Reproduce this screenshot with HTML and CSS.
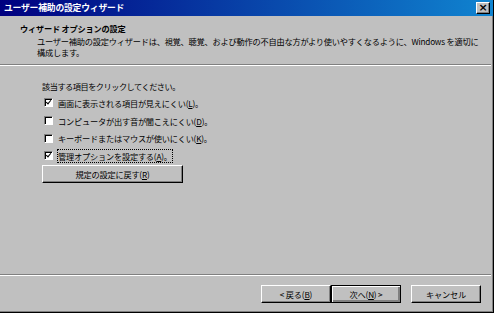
FILE: index.html
```html
<!DOCTYPE html>
<html lang="ja">
<head>
    <meta charset="UTF-8">
    <link rel="stylesheet" href="styles.css">
    <title>ユーザー補助の設定ウィザード</title>
</head>
<body>
    <div class="dialog">
        <div class="titlebar">
            <span class="title">ユーザー補助の設定ウィザード</span>
            <span class="close">×</span>
        </div>

        <div class="header">
            <div class="header-title">ウィザード オプションの設定</div>
            <div class="header-desc">ユーザー補助の設定ウィザードは、視覚、聴覚、および動作の不自由な方がより使いやすくなるように、Windows を適切に<br>構成します。</div>
        </div>
        <div class="sep"></div>

        <div class="content">
            <div class="prompt">該当する項目をクリックしてください。</div>
            <label class="check"><span class="box on"></span>画面に表示される項目が見えにくい(<u>L</u>)。</label>
            <label class="check"><span class="box"></span>コンピュータが出す音が聞こえにくい(<u>D</u>)。</label>
            <label class="check"><span class="box"></span>キーボードまたはマウスが使いにくい(<u>K</u>)。</label>
            <label class="check"><span class="box on"></span><span class="focus">管理オプションを設定する(<u>A</u>)。</span></label>
            <button class="btn wide">規定の設定に戻す(<u>R</u>)</button>
        </div>

        <div class="sep"></div>
        <div class="footer">
            <button class="btn">&lt; 戻る(<u>B</u>)</button>
            <button class="btn default">次へ(<u>N</u>) &gt;</button>
            <button class="btn cancel">キャンセル</button>
        </div>
    </div>
</body>
</html>
```

FILE: styles.css
```css
body {
    margin: 0;
    font-family: 'Noto Sans CJK JP', 'DejaVu Sans', sans-serif;
    font-size: 8.2px;
    letter-spacing: -0.2px;
    color: #000;
    background: #c0c0c0;
}

.dialog {
    width: 494px;
    height: 313px;
    box-sizing: border-box;
    background: #c0c0c0;
    border-right: 1px solid #000;
    border-bottom: 1px solid #000;
    box-shadow: inset -1px -1px 0 #808080;
    display: flex;
    flex-direction: column;
}

.titlebar {
    height: 16px;
    background: linear-gradient(to right, #000080, #1084d0);
    display: flex;
    align-items: center;
    justify-content: space-between;
    padding: 0 3px 0 4px;
}

.title {
    color: #fff;
    font-weight: bold;
    font-size: 8.8px;
    line-height: 16px;
}

.close {
    width: 14px;
    height: 12px;
    box-sizing: border-box;
    background: #c0c0c0;
    border: 1px solid;
    border-color: #fff #000 #000 #fff;
    box-shadow: inset -1px -1px 0 #808080;
    font-size: 11px;
    font-weight: bold;
    line-height: 9px;
    text-align: center;
    font-family: 'DejaVu Sans', sans-serif;
}

.header {
    height: 48px;
    padding: 6px 0 0 20px;
    box-sizing: border-box;
}

.header-title {
    font-weight: bold;
    line-height: 13px;
}

.header-desc {
    margin-left: 17px;
    margin-top: 1px;
    line-height: 11px;
    white-space: nowrap;
}

.sep {
    height: 1px;
    background: #808080;
    border-bottom: 1px solid #fff;
    margin-right: 2px;
}

.content {
    flex: 1;
    padding: 14px 0 0 42px;
}

.prompt {
    line-height: 12px;
    margin-bottom: 2px;
    letter-spacing: -0.5px;
}

.check {
    display: flex;
    align-items: center;
    height: 17.7px;
}

.box {
    width: 9px;
    height: 9px;
    box-sizing: border-box;
    background: #fff;
    border: 1px solid;
    border-color: #808080 #fff #fff #808080;
    box-shadow: inset 1px 1px 0 #000;
    margin: 0 5px 0 2px;
    position: relative;
}

.box.on::after {
    content: "";
    position: absolute;
    left: 2px;
    top: 0px;
    width: 2px;
    height: 4px;
    border: solid #000;
    border-width: 0 1.5px 1.5px 0;
    transform: rotate(40deg);
}

.focus {
    outline: 1px dotted #000;
}

.btn {
    font: inherit;
    letter-spacing: inherit;
    background: #c0c0c0;
    border: 1px solid;
    border-color: #fff #000 #000 #fff;
    box-shadow: inset -1px -1px 0 #808080;
    padding: 0;
    height: 18px;
    color: #000;
}

.wide {
    width: 141px;
}

.footer {
    height: 36px;
    display: flex;
    align-items: center;
    padding: 0 0 0 261px;
    box-sizing: border-box;
}

.footer .btn {
    width: 70px;
}

.footer .default {
    border: 1px solid #000;
    box-shadow: inset 1px 1px 0 #fff, inset -2px -2px 0 #808080;
}

.footer .cancel {
    margin-left: 10px;
}
```
